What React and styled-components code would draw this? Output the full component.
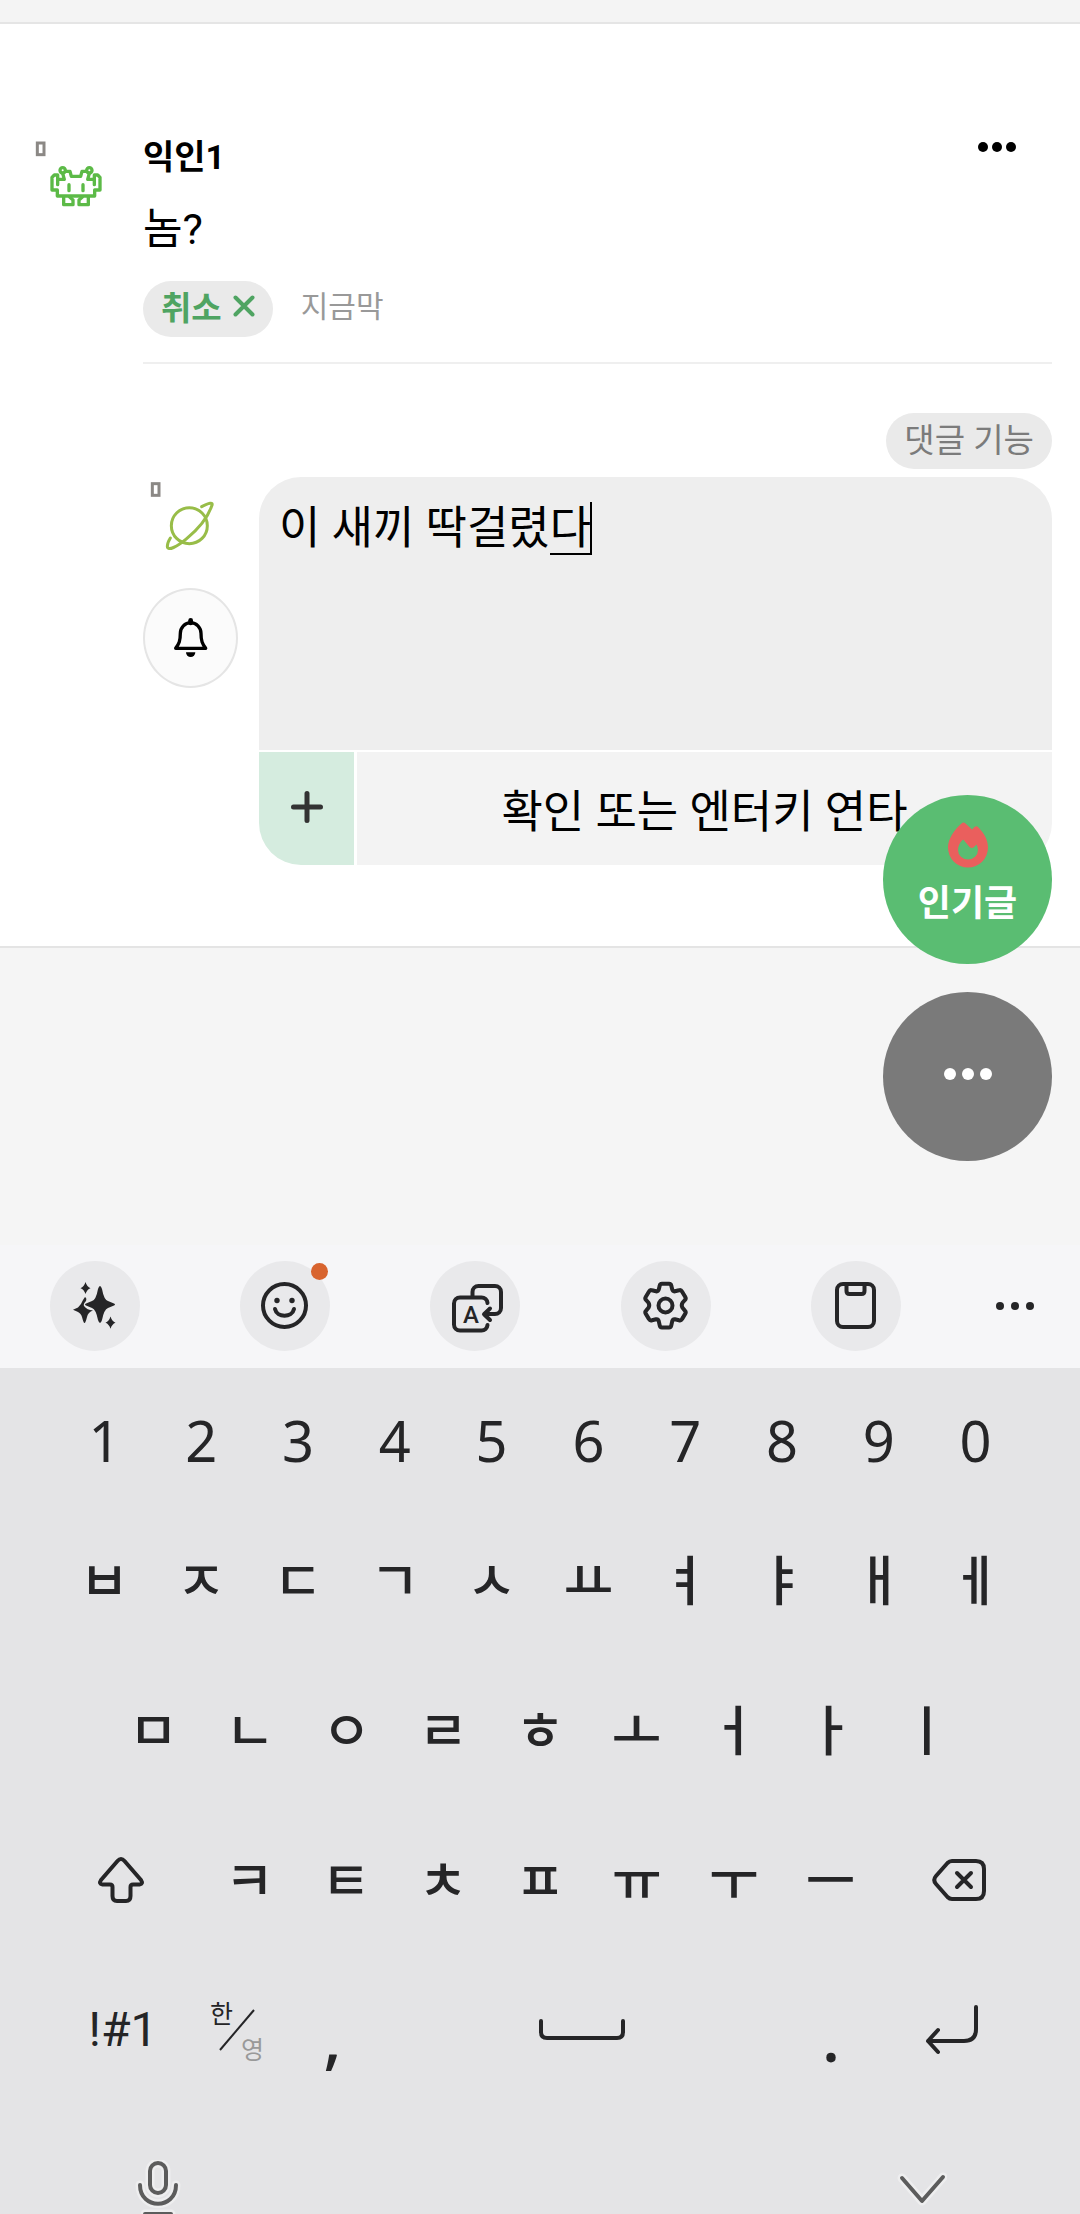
import React, { useState } from "react";
import styled, { createGlobalStyle } from 'styled-components'

const numberKeys = ['1', '2', '3', '4', '5', '6', '7', '8', '9', '0']
const topKeys = ['ㅂ', 'ㅈ', 'ㄷ', 'ㄱ', 'ㅅ', 'ㅛ', 'ㅕ', 'ㅑ', 'ㅐ', 'ㅔ']
const middleKeys = ['ㅁ', 'ㄴ', 'ㅇ', 'ㄹ', 'ㅎ', 'ㅗ', 'ㅓ', 'ㅏ', 'ㅣ']
const bottomKeys = ['ㅋ', 'ㅌ', 'ㅊ', 'ㅍ', 'ㅠ', 'ㅜ', 'ㅡ']

const AlienAvatar = () => (
    <Avatar viewBox="24 51 285 285" aria-hidden="true">
        <rect x="52" y="69" width="20" height="35" fill="none" stroke="#8b8885" strokeWidth="9" />
        <g fill="none" stroke="#5cba47" strokeWidth="10" strokeLinejoin="round" strokeLinecap="round">
            <circle cx="128" cy="151" r="8" />
            <circle cx="208" cy="151" r="8" />
            <path d="M137 154h13l4 15h28l4-15h13" />
            <path d="M128 160l5 18h-19M208 160l-5 18h19" />
            <path d="M113 194v-29h-10l-7 7v38h16v18h112v-18h16v-38l-7-7h-10v29" />
            <path d="M147 194v18M189 194v18" />
            <path d="M131 230v24h28v-14l-10-9M205 230v24h-28v-14l10-9" />
        </g>
    </Avatar>
)

const PlanetAvatar = () => (
    <Avatar viewBox="9 51 285 285" aria-hidden="true">
        <rect x="37" y="71" width="20" height="35" fill="none" stroke="#8b8885" strokeWidth="9" />
        <g fill="none" stroke="#98bd48" strokeWidth="9" strokeLinecap="round">
            <circle cx="148" cy="197" r="54" />
            <path d="M185 140C205 129 222 124 215 138C204 171 176 206 140 236C112 260 82 275 82 259C82 249 86 242 91 234" />
        </g>
    </Avatar>
)

const BellIcon = () => (
    <svg width="38" height="44" viewBox="96 467 114 132" aria-hidden="true">
        <path d="M107 564c10-14 14-22 14-45a31 32 0 0 1 62 0c0 23 4 31 14 45z" fill="none" stroke="#000" strokeWidth="10" strokeLinejoin="round" />
        <path d="M152 480v8" stroke="#000" strokeWidth="14" strokeLinecap="round" />
        <path d="M138 576h28a14 14 0 0 1-28 0z" />
    </svg>
)

const Dots = ({ size, gap }) => {
    const width = size * 3 + gap * 2
    return (
        <svg width={width} height={size} viewBox={`0 0 ${width} ${size}`} fill="currentColor" aria-hidden="true">
            {[0, 1, 2].map((i) => (
                <circle key={i} cx={size / 2 + i * (size + gap)} cy={size / 2} r={size / 2} />
            ))}
        </svg>
    )
}

const FlameIcon = () => (
    <svg width="42" height="46" viewBox="0 0 42 46" aria-hidden="true">
        <path fill="#ea5f5d" fillRule="evenodd" d="M14.500 1.500Q16.500-.500 18.500 1.500L25 7.500L27.500 5Q29.500 3.500 31.500 5.500C37 11 41 18 41 25.500A20 20 0 0 1 1 25.500C1 17 7 8 14.500 1.500ZM15 18.500C12.500 21 11 24.500 11 28A10 9.500 0 0 0 31 28Q31 25.500 29.500 22.500L27 25Q25 27 22.500 25L17.500 19Q16.500 17 15 18.500Z" />
    </svg>
)

const toolIcons = [
    {
        label: 'AI',
        icon: (
            <g fill="#252527">
                <path d="M50 25Q51 25 52 28Q54 39 58 40L64 42.500Q66 43.500 64 44.500L58 47Q54 48.500 52 59Q51 62 50 62Q49 62 48 59Q46 48.500 42 47L36 44.500Q34 43.500 36 42.500L42 40Q46 39 48 28Q49 25 50 25Z" />
                <path d="M35 36Q37 37 36 40Q33 43 34 45Q37 49 43 49.500Q38 51 37 56Q35.500 62 34.500 62Q33.500 62 32 56Q31 52 27 50.500L23 48.700L28 46.500Q31 44 33 39Z" />
                <path d="M35.500 21Q37 26 40.500 27.200Q37 28.500 35.500 33Q34 28.500 30.500 27.200Q34 26 35.500 21ZM60.500 55.500Q62 60.500 65.500 61.700Q62 63 60.500 67.700Q59 63 55.500 61.700Q59 60.500 60.500 55.500Z" />
            </g>
        ),
    },
    {
        label: '이모티콘',
        badge: true,
        icon: (
            <g>
                <circle cx="44.500" cy="44.500" r="21.500" />
                <path d="M35 48c2 9 17 9 19 0" />
                <circle cx="37" cy="39.500" r="2.700" fill="#252527" stroke="none" />
                <circle cx="52" cy="39.500" r="2.700" fill="#252527" stroke="none" />
            </g>
        ),
    },
    {
        label: '번역',
        icon: (
            <g>
                <path d="M42.500 36v-5a6 6 0 0 1 6-6H65a6 6 0 0 1 6 6v16a6 6 0 0 1-6 6H55" />
                <path d="M60 47.500l-6 5.700l6 5.800" />
                <path d="M57.500 42a6 6 0 0 0-6-5.500H30a6 6 0 0 0-6 6v21a6 6 0 0 0 6 6h21.500a6 6 0 0 0 6-5.500" />
                <text x="41" y="62" textAnchor="middle" fontFamily="Roboto" fontSize="24" fontWeight="500" fill="#252527" stroke="none">A</text>
            </g>
        ),
    },
    {
        label: '설정',
        icon: (
            <g>
                <path d="M41 22.700h7q2 0 2.300 2l1 4q.700 2 2.700 1.600l4-1q2-.700 3 1.200l3.300 5.500q1 1.600-.400 3l-2.400 2.800q-1.500 2.500 0 5l2.400 2.800q1.400 1.400.400 3l-3.300 5.500q-1 1.900-3 1.200l-4-1q-2-.400-2.700 1.600l-1 4.500q-.300 2-2.300 2h-7q-2 0-2.300-2l-1-4.500q-.700-2-2.700-1.600l-4 1q-2 .700-3-1.200l-3.300-5.500q-1-1.600.400-3l2.400-2.800q1.500-2.500 0-5l-2.400-2.800q-1.400-1.400-.400-3l3.300-5.500q1-1.900 3-1.200l4 1q2 .400 2.700-1.600l1-4q.300-2 2.300-2z" />
                <circle cx="44.500" cy="44.500" r="7" />
            </g>
        ),
    },
    {
        label: '클립보드',
        icon: (
            <g>
                <rect x="26" y="23" width="37" height="43" rx="6" />
                <path d="M35.500 23v7q0 3 3 3h12q3 0 3-3v-7" />
            </g>
        ),
    },
]

const App = () => {
    const [text, setText] = useState('이 새끼 딱걸렸다')

    return (
        <Page>
            <GlobalStyle />
            <Content>
                <TopStrip />
                <Thread>
                    <Comment>
                        <AlienAvatar />
                        <CommentBody>
                            <CommentHeader>
                                <Name>익인1</Name>
                                <MoreButton aria-label="더보기"><Dots size={10} gap={4} /></MoreButton>
                            </CommentHeader>
                            <CommentText>놈?</CommentText>
                            <Actions>
                                <CancelButton>
                                    취소
                                    <svg width="22" height="22" viewBox="0 0 22 22" aria-hidden="true">
                                        <path d="M2.500 2.500l17 17M19.500 2.500l-17 17" stroke="currentColor" strokeWidth="4" strokeLinecap="round" />
                                    </svg>
                                </CancelButton>
                                <Time>지금막</Time>
                            </Actions>
                        </CommentBody>
                    </Comment>

                    <Reply>
                        <FeatureButton>댓글 기능</FeatureButton>
                        <Composer>
                            <Side>
                                <PlanetAvatar />
                                <BellButton aria-label="알림"><BellIcon /></BellButton>
                            </Side>
                            <Box>
                                <Field>
                                    <TextArea aria-label="댓글" value={text} onChange={(e) => setText(e.target.value)} />
                                    <Composing />
                                </Field>
                                <Submit>
                                    <PlusButton aria-label="추가">
                                        <svg width="32" height="32" viewBox="0 0 32 32" aria-hidden="true">
                                            <path d="M16 2.500v27M2.500 16h27" stroke="#333" strokeWidth="5" strokeLinecap="round" />
                                        </svg>
                                    </PlusButton>
                                    <SubmitButton>확인 또는 엔터키 연타</SubmitButton>
                                </Submit>
                            </Box>
                        </Composer>
                    </Reply>
                </Thread>

                <Floating>
                    <PopularButton $color="#5abd72">
                        <FlameIcon />
                        인기글
                    </PopularButton>
                    <RoundButton $color="#7a7a7a" aria-label="메뉴">
                        <Dots size={12} gap={6} />
                    </RoundButton>
                </Floating>
            </Content>

            <Toolbar>
                {toolIcons.map((item) => (
                    <ToolButton key={item.label} aria-label={item.label}>
                        <svg width="90" height="90" viewBox="0 0 90 90" fill="none" stroke="#252527" strokeWidth="4" strokeLinecap="round" strokeLinejoin="round" aria-hidden="true">
                            {React.cloneElement(item.icon, item.icon.props.fill ? { stroke: 'none' } : {})}
                        </svg>
                        {item.badge && <Badge />}
                    </ToolButton>
                ))}
                <ToolMore aria-label="더보기"><Dots size={8} gap={7} /></ToolMore>
            </Toolbar>

            <Keyboard>
                <NumberRow>
                    {numberKeys.map((key) => <NumberKey key={key}>{key}</NumberKey>)}
                </NumberRow>
                <KeyRow>
                    {topKeys.map((key) => <LetterKey key={key}>{key}</LetterKey>)}
                </KeyRow>
                <MiddleRow>
                    {middleKeys.map((key) => <LetterKey key={key}>{key}</LetterKey>)}
                </MiddleRow>
                <ShiftRow>
                    <Key aria-label="시프트">
                        <svg width="48" height="48" viewBox="0 0 48 48" fill="none" stroke="currentColor" strokeWidth="4" strokeLinejoin="round" aria-hidden="true">
                            <path d="M20.500 5Q24 1 27.500 5L44 24Q46.500 28 42.500 28.500H36Q33.500 28.500 33.500 31V40Q33.500 45 29 45H20Q15.500 45 15.500 40V31Q15.500 28.500 13 28.500H5.500Q1.500 28 4 24Z" />
                        </svg>
                    </Key>
                    {bottomKeys.map((key) => <LetterKey key={key}>{key}</LetterKey>)}
                    <Key aria-label="지우기">
                        <svg width="54" height="42" viewBox="0 0 54 42" fill="none" stroke="currentColor" strokeWidth="4" strokeLinejoin="round" strokeLinecap="round" aria-hidden="true">
                            <path d="M20 2H44Q52 2 52 10V32Q52 40 44 40H20Q17.500 40 15.500 38L4 25Q.500 21 4 17L15.500 4Q17.500 2 20 2Z" />
                            <path d="M25 14l14 14M39 14l-14 14" />
                        </svg>
                    </Key>
                </ShiftRow>
                <SpaceRow>
                    <SymbolKey>!#1</SymbolKey>
                    <Key>
                        <Language>
                            <Korean>한</Korean>
                            <svg width="36" height="42" viewBox="0 0 36 42" aria-hidden="true">
                                <path d="M1 41L35 1" stroke="currentColor" strokeWidth="2" />
                            </svg>
                            <English>영</English>
                        </Language>
                    </Key>
                    <MarkKey>,</MarkKey>
                    <Key aria-label="스페이스">
                        <svg width="86" height="22" viewBox="0 0 86 22" fill="none" stroke="currentColor" strokeWidth="4" strokeLinecap="round" aria-hidden="true">
                            <path d="M2 2v11q0 6 6 6h70q6 0 6-6v-11" />
                        </svg>
                    </Key>
                    <MarkKey>.</MarkKey>
                    <Key aria-label="엔터">
                        <svg width="54" height="50" viewBox="0 0 54 50" fill="none" stroke="currentColor" strokeWidth="4" strokeLinecap="round" strokeLinejoin="round" aria-hidden="true">
                            <path d="M51 2v22q0 12-12 12H3M13 25L3 36l10 11" />
                        </svg>
                    </Key>
                </SpaceRow>
                <NavRow>
                    <NavButton aria-label="음성 입력">
                        <svg width="48" height="54" viewBox="0 0 48 54" fill="none" strokeLinecap="round" aria-hidden="true">
                            <g stroke="#eeeeef" strokeWidth="9">
                                <rect x="16" y="3" width="16" height="30" rx="8" />
                                <path d="M6 25C6 50 42 50 42 25M11 54h26" />
                            </g>
                            <g stroke="#5c5c5c" strokeWidth="4">
                                <rect x="16" y="3" width="16" height="30" rx="8" />
                                <path d="M6 25C6 50 42 50 42 25M11 54h26" />
                            </g>
                        </svg>
                    </NavButton>
                    <NavButton aria-label="키보드 닫기">
                        <svg width="50" height="54" viewBox="0 0 50 54" fill="none" strokeLinecap="round" strokeLinejoin="round" aria-hidden="true">
                            <path d="M5 18l20 23l21-24" stroke="#eeeeef" strokeWidth="9" />
                            <path d="M5 18l20 23l21-24" stroke="#5c5c5c" strokeWidth="4" />
                        </svg>
                    </NavButton>
                </NavRow>
            </Keyboard>
        </Page>
    )
}

const GlobalStyle = createGlobalStyle`
    * {
        box-sizing: border-box;
    }

    body {
        margin: 0;
        font-family: Roboto, "Noto Sans CJK KR", sans-serif;
        color: #000;
    }

    button {
        margin: 0;
        padding: 0;
        border: 0;
        background: none;
        font: inherit;
        color: inherit;
        cursor: pointer;
    }

    svg {
        display: block;
    }
`;

const Page = styled.div`
    display: flex;
    flex-direction: column;
    min-height: 100vh;
    background-color: #f5f5f5;
`;

const Content = styled.main`
    position: relative;
    flex: 1;
    padding-bottom: 297px;
`;

const TopStrip = styled.div`
    height: 24px;
    border-bottom: 2px solid #e5e5e5;
    background-color: #f4f4f4;
`;

const Thread = styled.section`
    padding: 113px 28px 81px;
    border-bottom: 2px solid #e4e4e4;
    background-color: #fff;
`;

const Comment = styled.article`
    display: grid;
    grid-template-columns: 95px 1fr;
    column-gap: 20px;
`;

const Avatar = styled.svg`
    width: 95px;
    height: 95px;
`;

const CommentBody = styled.div`
    display: flex;
    flex-direction: column;
    gap: 24px;
    padding-bottom: 25px;
    border-bottom: 2px solid #efefef;
`;

const CommentHeader = styled.div`
    display: flex;
    justify-content: space-between;
    align-items: flex-start;
`;

const Name = styled.strong`
    font-size: 34px;
    line-height: 40px;
    font-weight: 700;
`;

const MoreButton = styled.button`
    margin-right: 36px;
    padding: 5px 0;
`;

const CommentText = styled.p`
    margin: 0;
    font-size: 43px;
    line-height: 56px;
`;

const Actions = styled.div`
    display: flex;
    gap: 28px;
    height: 56px;
`;

const CancelButton = styled.button`
    display: flex;
    align-items: center;
    gap: 11px;
    padding: 0 18px 6px;
    border-radius: 28px;
    background-color: #eaeaea;
    color: #4fa462;
    font-size: 33px;
    font-weight: 700;
`;

const Time = styled.span`
    color: #999;
    font-size: 30px;
    line-height: 52px;
`;

const Reply = styled.div`
    display: flex;
    flex-direction: column;
    gap: 8px;
    padding: 49px 0 0 115px;
`;

const FeatureButton = styled.button`
    align-self: flex-end;
    height: 56px;
    padding: 0 18px 6px;
    border-radius: 28px;
    background-color: #eaeaea;
    color: #7b7b7b;
    font-size: 33px;
`;

const Composer = styled.div`
    display: grid;
    grid-template-columns: 95px 1fr;
    column-gap: 21px;
`;

const Side = styled.div`
    display: flex;
    flex-direction: column;
    gap: 16px;
`;

const BellButton = styled.button`
    display: flex;
    align-items: center;
    justify-content: center;
    height: 100px;
    border: 2px solid #e5e5e5;
    border-radius: 50%;
    background-color: #fbfbfb;
`;

const Box = styled.div`
    display: flex;
    flex-direction: column;
    gap: 2px;
    border-radius: 42px;
    overflow: hidden;
`;

const Field = styled.div`
    position: relative;
    display: flex;
`;

const TextArea = styled.textarea`
    width: 100%;
    height: 273px;
    padding: 22px 20px;
    border: 0;
    outline: 0;
    resize: none;
    background-color: #eee;
    color: #000;
    font-family: inherit;
    font-size: 45px;
    line-height: 60px;
`;

/* underline of the syllable being typed, closed by the caret */
const Composing = styled.span`
    position: absolute;
    left: 291px;
    top: 25px;
    width: 42px;
    height: 53px;
    border-right: 2px solid #000;
    border-bottom: 2px solid #000;
    pointer-events: none;
`;

const Submit = styled.div`
    display: flex;
    gap: 3px;
    height: 113px;
`;

const PlusButton = styled.button`
    display: flex;
    align-items: center;
    justify-content: center;
    width: 95px;
    padding-bottom: 4px;
    background-color: #d5ecdf;
`;

const SubmitButton = styled.button`
    flex: 1;
    background-color: #f3f3f3;
    font-size: 45px;
`;

const Floating = styled.div`
    position: absolute;
    right: 28px;
    bottom: 84px;
    display: flex;
    flex-direction: column;
    gap: 28px;
`;

const RoundButton = styled.button`
    display: flex;
    flex-direction: column;
    align-items: center;
    justify-content: center;
    width: 169px;
    height: 169px;
    padding-bottom: 6px;
    border-radius: 50%;
    background-color: ${({ $color }) => $color};
    color: #fff;
`;

const PopularButton = styled(RoundButton)`
    gap: 12px;
    padding-bottom: 10px;
    font-size: 36px;
    line-height: 48px;
    font-weight: 700;
`;

const Toolbar = styled.div`
    display: flex;
    justify-content: space-between;
    align-items: flex-start;
    padding: 16px 41px 17px 50px;
    background-color: #f6f6f8;
`;

const ToolButton = styled.button`
    position: relative;
    border-radius: 50%;
    background-color: #e9e9eb;
`;

const Badge = styled.span`
    position: absolute;
    top: 2px;
    right: 2px;
    width: 17px;
    height: 17px;
    border-radius: 50%;
    background-color: #d8642f;
`;

const ToolMore = styled.button`
    align-self: center;
    margin-left: -5px;
    padding: 20px 5px 20px 0;
    color: #252527;
`;

const Keyboard = styled.div`
    padding-top: 12px;
    background-color: #e4e4e6;
    color: #252527;
`;

const KeyRow = styled.div`
    display: grid;
    grid-auto-flow: column;
    grid-auto-columns: 1fr;
    height: 150px;
    padding: 0 56px;
`;

const NumberRow = styled(KeyRow)`
    height: 125px;
`;

const MiddleRow = styled(KeyRow)`
    padding: 0 105px;
`;

const ShiftRow = styled(KeyRow)`
    grid-template-columns: 165fr repeat(7, 100fr) 165fr;
    padding: 0 41px;
`;

const SpaceRow = styled(KeyRow)`
    grid-template-columns: 134fr 94fr 97fr 402fr 96fr 145fr;
`;

const Key = styled.button`
    display: flex;
    align-items: center;
    justify-content: center;
    font-family: "Noto Sans CJK KR", sans-serif;
    font-size: 54px;
    line-height: 60px;
`;

const LetterKey = styled(Key)`
    padding-bottom: 4px;
    font-weight: 500;
`;

const NumberKey = styled(Key)`
    padding-bottom: 6px;
    font-family: "Noto Sans", sans-serif;
    font-size: 56px;
`;

const SymbolKey = styled(Key)`
    font-family: Roboto, sans-serif;
    font-size: 48px;
`;

const MarkKey = styled(Key)`
    padding-top: 12px;
    font-family: "Noto Sans", sans-serif;
    font-size: 68px;
    font-weight: 500;
`;

const Language = styled.span`
    display: grid;
    width: 54px;
    height: 60px;
    font-size: 25px;
    line-height: 24px;

    > * {
        grid-area: 1 / 1;
        place-self: center;
    }
`;

const Korean = styled.span`
    && {
        place-self: start;
    }
`;

const English = styled.span`
    color: #999;

    && {
        place-self: end;
    }
`;

const NavRow = styled.div`
    display: flex;
    justify-content: space-between;
    padding: 55px 133px 0 134px;
`;

const NavButton = styled.button`
    overflow: hidden;
`;

export default App
